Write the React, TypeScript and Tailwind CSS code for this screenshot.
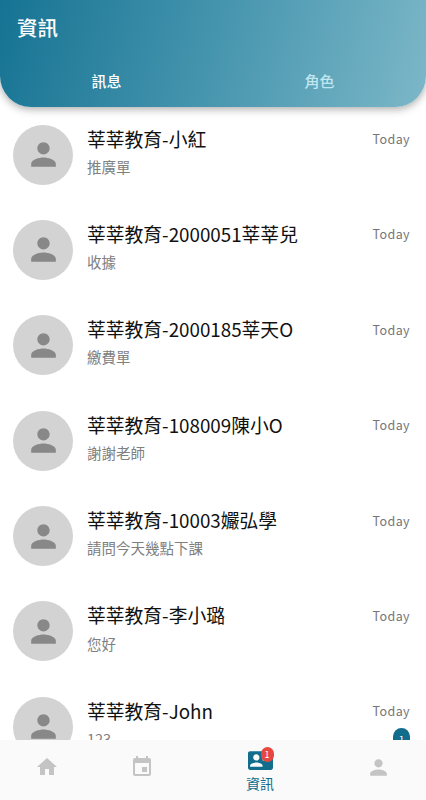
import React from "react";
import { MdContactMail, MdEvent, MdHome, MdPerson } from "react-icons/md";

interface Message {
  name: string;
  text: string;
  date: string;
  unread?: number;
}

const messages: Message[] = [
  { name: "莘莘教育-小紅", text: "推廣單", date: "Today" },
  { name: "莘莘教育-2000051莘莘兒", text: "收據", date: "Today" },
  { name: "莘莘教育-2000185莘天O", text: "繳費單", date: "Today" },
  { name: "莘莘教育-108009陳小O", text: "謝謝老師", date: "Today" },
  { name: "莘莘教育-10003孍弘學", text: "請問今天幾點下課", date: "Today" },
  { name: "莘莘教育-李小璐", text: "您好", date: "Today" },
  { name: "莘莘教育-John", text: "123", date: "Today", unread: 1 },
];

const Header: React.FC = () => (
  <header className="relative z-10 h-[106.5px] shrink-0 rounded-b-[31px] bg-[linear-gradient(105deg,#167393_0%,#4695ae_50%,#7cb7c8_100%)] pt-[11px] text-white shadow-[0_2px_9px_rgba(0,0,0,0.35)]">
    <h1 className="h-8 pl-[17px] text-[20.5px] leading-8 font-medium">資訊</h1>
    <div className="mt-[22.5px] grid grid-cols-2 text-center text-[15px] leading-[30px] font-medium">
      <span>訊息</span>
      <span className="text-[#c0e7f0]">角色</span>
    </div>
  </header>
);

const MessageRow: React.FC<{ message: Message }> = ({ message }) => (
  <li className="flex h-[95.4px] shrink-0 items-start pr-[16px] pl-[13.3px]">
    <div className="mt-[4px] flex size-[60px] shrink-0 items-center justify-center rounded-full bg-[#d3d3d3] text-[#888]">
      <MdPerson className="size-[37px]" />
    </div>
    <div className="ml-[13.7px] min-w-0 flex-1 whitespace-nowrap">
      <p className="mt-[4px] text-[18.8px] leading-7 text-[#111]">{message.name}</p>
      <p className="mt-[3.2px] text-[14.5px] leading-[22px] text-[#808080]">{message.text}</p>
    </div>
    <div className="flex flex-col items-end">
      <span className="mt-[8.5px] text-[12.5px] leading-5 tracking-[0.4px] text-[#757575]">
        {message.date}
      </span>
      {message.unread && (
        <span className="mt-[7px] flex h-[23px] w-[17px] items-center justify-center rounded-full bg-[#116d8b] text-[10px] leading-none text-white">
          {message.unread}
        </span>
      )}
    </div>
  </li>
);

const BottomNav: React.FC = () => (
  <nav className="grid h-[60.5px] shrink-0 grid-cols-[94px_95px_1fr_95px] bg-[#fafafa] text-[#c4c4c4]">
    <div className="flex justify-center pt-[15.5px]">
      <MdHome className="size-[24px]" />
    </div>
    <div className="flex justify-center pt-[15.5px]">
      <MdEvent className="size-[24px]" />
    </div>
    <div className="flex flex-col items-center pt-[8px] text-[#116d8b]">
      <div className="relative">
        <MdContactMail className="size-[25px]" />
        <span className="absolute -top-[0.5px] left-[13px] flex h-[14.5px] w-[13px] items-center justify-center rounded-full bg-[#e7473f] text-[9px] leading-none text-white">
          1
        </span>
      </div>
      <span className="text-[14px] leading-[21px]">資訊</span>
    </div>
    <div className="flex justify-center pt-[15.5px]">
      <MdPerson className="size-[25px]" />
    </div>
  </nav>
);

const App: React.FC = () => {
  return (
    <div
      lang="zh-Hant"
      className="flex h-[800px] w-[426px] flex-col overflow-hidden bg-white font-['Noto_Sans_CJK_TC',sans-serif]"
    >
      <Header />
      <ul className="flex min-h-0 flex-1 flex-col overflow-hidden pt-[14px]">
        {messages.map((message) => (
          <MessageRow key={message.name} message={message} />
        ))}
      </ul>
      <BottomNav />
    </div>
  );
};

export default App;
